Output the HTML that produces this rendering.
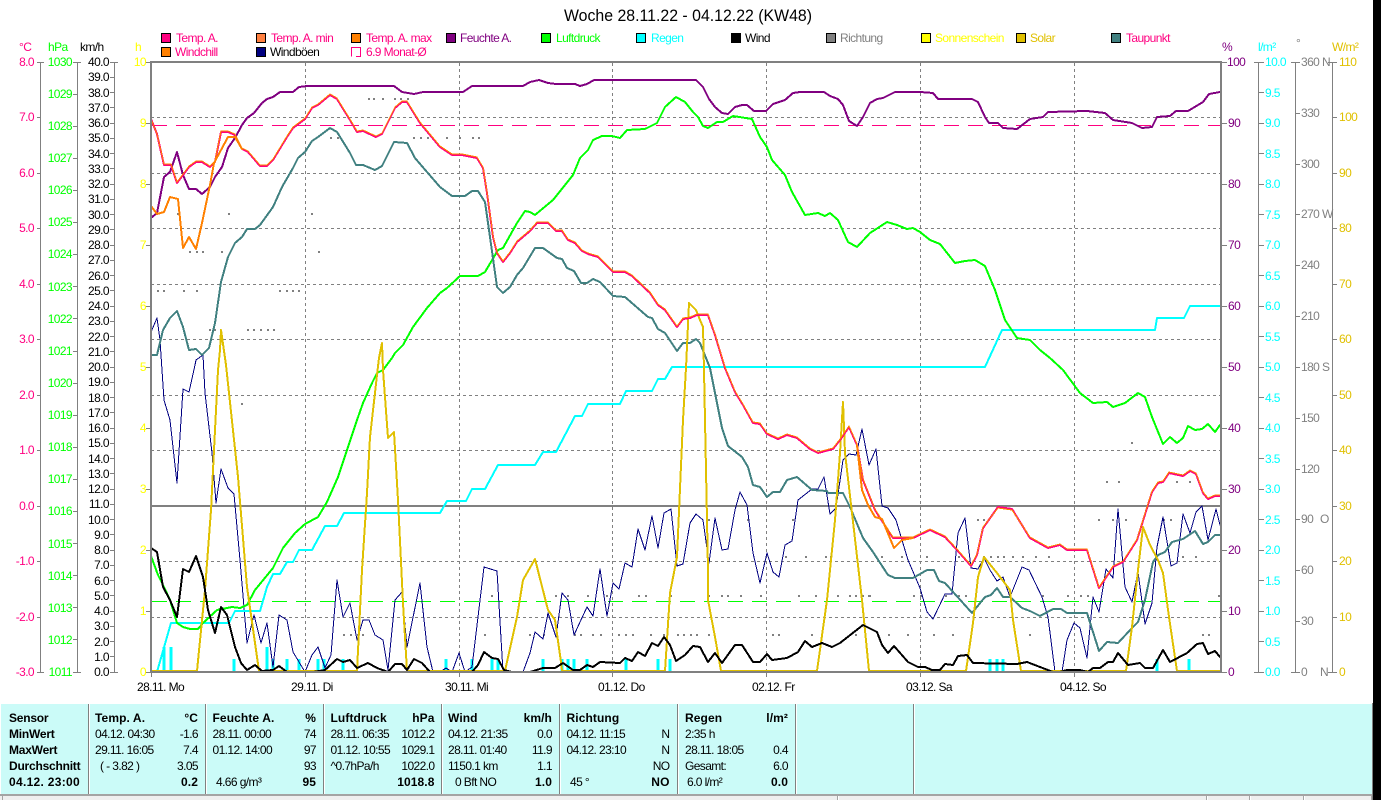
<!DOCTYPE html>
<html lang="de"><head><meta charset="utf-8"><title>Woche 28.11.22 - 04.12.22 (KW48)</title>
<style>
html,body{margin:0;padding:0;background:#fff;width:1381px;height:800px;overflow:hidden}
svg{display:block;position:absolute;left:0;top:0;white-space:pre}
text{font-family:"Liberation Sans",sans-serif;font-size:12px;letter-spacing:-.6px}
.l{fill:none;stroke-linejoin:round;stroke-linecap:round;shape-rendering:crispEdges}
.c{shape-rendering:crispEdges}
.b{font-weight:bold;letter-spacing:.1px}
.n{font-weight:bold;letter-spacing:-.22px}
.t{font-weight:bold;letter-spacing:.3px}
.e{text-anchor:end}
</style></head><body>
<svg width="1381" height="800" viewBox="0 0 1381 800" xmlns="http://www.w3.org/2000/svg">
<rect width="1381" height="800" fill="#fff"/>
<text x="564" y="21" font-size="17" textLength="248" lengthAdjust="spacingAndGlyphs" style="font-size:17px;letter-spacing:0" fill="#000">Woche 28.11.22 - 04.12.22 (KW48)</text>

<!-- legend -->
<g class="c" stroke="#000" stroke-width="1">
<rect x="161.5" y="33.5" width="9" height="9" fill="#FF0080"/>
<rect x="256.5" y="33.5" width="9" height="9" fill="#FF8040"/>
<rect x="351.5" y="33.5" width="9" height="9" fill="#FF8000"/>
<rect x="446.5" y="33.5" width="9" height="9" fill="#800080"/>
<rect x="541.5" y="33.5" width="9" height="9" fill="#00FF00"/>
<rect x="636.5" y="33.5" width="9" height="9" fill="#00FFFF"/>
<rect x="731.5" y="33.5" width="9" height="9" fill="#000"/>
<rect x="826.5" y="33.5" width="9" height="9" fill="#808080"/>
<rect x="921.5" y="33.5" width="9" height="9" fill="#FFFF00"/>
<rect x="1016.5" y="33.5" width="9" height="9" fill="#E0C000"/>
<rect x="1111.5" y="33.5" width="9" height="9" fill="#408080"/>
<rect x="161.5" y="47.5" width="9" height="9" fill="#FF8000"/>
<rect x="256.5" y="47.5" width="9" height="9" fill="#000080"/>
</g>
<path class="c" d="M351.5 51V47.5H360.5V56.5H356" fill="none" stroke="#FF0080"/>
<path class="c" d="M351.5 51V56.5" fill="none" stroke="#FF0080"/>
<text x="176" y="42" fill="#FF0080">Temp. A.</text>
<text x="271" y="42" fill="#FF0080">Temp. A. min</text>
<text x="366" y="42" fill="#FF0080">Temp. A. max</text>
<text x="460" y="42" fill="#800080">Feuchte A.</text>
<text x="556" y="42" fill="#00FF00">Luftdruck</text>
<text x="651" y="42" fill="#00FFFF">Regen</text>
<text x="745" y="42" fill="#000">Wind</text>
<text x="840" y="42" fill="#808080">Richtung</text>
<text x="935" y="42" fill="#FFFF00">Sonnenschein</text>
<text x="1030" y="42" fill="#E0C000">Solar</text>
<text x="1126" y="42" fill="#FF0080">Taupunkt</text>
<text x="175" y="56" fill="#FF0080">Windchill</text>
<text x="270" y="56" fill="#000">Windböen</text>
<text x="366" y="56" fill="#FF0080">6.9 Monat-Ø</text>

<!-- unit heads -->
<text x="19" y="51" fill="#FF0080">°C</text>
<text x="48" y="51" fill="#00FF00">hPa</text>
<text x="80" y="51" fill="#000">km/h</text>
<text x="135" y="51" fill="#FFFF00">h</text>
<text x="1222" y="51" fill="#800080">%</text>
<text x="1258" y="51" fill="#00FFFF">l/m²</text>
<text x="1296" y="47" fill="#808080">°</text>
<text x="1332" y="51" fill="#E0C000">W/m²</text>

<!-- axes -->
<path class="c" fill="none" stroke="#808080" stroke-width="1" d="M40.5 62V672M77.5 62V672M114.5 62V672M1258.5 62V672M1295.5 62V672M1332.5 62V672
M37 62.5H44M37 117.5H41M37 173.5H41M37 228.5H41M37 284.5H41M37 339.5H41M37 395.5H41M37 450.5H41M37 506.5H41M37 561.5H41M37 617.5H41M37 672.5H44
M73 62.5H81M73 94.5H78M73 126.5H78M73 158.5H78M73 190.5H78M73 222.5H78M73 254.5H78M73 286.5H78M73 318.5H78M73 351.5H78M73 383.5H78M73 415.5H78M73 447.5H78M73 479.5H78M73 511.5H78M73 543.5H78M73 575.5H78M73 607.5H78M73 639.5H78M73 672.5H81
M110 62.5H118M110 77.5H115M110 92.5H115M110 107.5H115M110 123.5H115M110 138.5H115M110 153.5H115M110 168.5H115M110 184.5H115M110 199.5H115M110 214.5H115M110 229.5H115M110 245.5H115M110 260.5H115M110 275.5H115M110 290.5H115M110 306.5H115M110 321.5H115M110 336.5H115M110 351.5H115M110 367.5H115M110 382.5H115M110 397.5H115M110 412.5H115M110 428.5H115M110 443.5H115M110 458.5H115M110 473.5H115M110 489.5H115M110 504.5H115M110 519.5H115M110 534.5H115M110 550.5H115M110 565.5H115M110 580.5H115M110 595.5H115M110 611.5H115M110 626.5H115M110 641.5H115M110 656.5H115M110 672.5H118
M146 62.5H150M146 123.5H150M146 184.5H150M146 245.5H150M146 306.5H150M146 367.5H150M146 428.5H150M146 489.5H150M146 550.5H150M146 611.5H150M146 672.5H150
M1222 62.5H1227M1222 123.5H1227M1222 184.5H1227M1222 245.5H1227M1222 306.5H1227M1222 367.5H1227M1222 428.5H1227M1222 489.5H1227M1222 550.5H1227M1222 611.5H1227M1222 672.5H1227
M1254 62.5H1264M1259 92.5H1264M1259 123.5H1264M1259 153.5H1264M1259 184.5H1264M1259 214.5H1264M1259 245.5H1264M1259 275.5H1264M1259 306.5H1264M1259 336.5H1264M1259 367.5H1264M1259 397.5H1264M1259 428.5H1264M1259 458.5H1264M1259 489.5H1264M1259 519.5H1264M1259 550.5H1264M1259 580.5H1264M1259 611.5H1264M1259 641.5H1264M1254 672.5H1264
M1291 62.5H1300M1296 113.5H1300M1296 164.5H1300M1296 214.5H1300M1296 265.5H1300M1296 316.5H1300M1296 367.5H1300M1296 418.5H1300M1296 469.5H1300M1296 519.5H1300M1296 570.5H1300M1296 621.5H1300M1291 672.5H1300
M1328 62.5H1337M1333 117.5H1337M1333 173.5H1337M1333 228.5H1337M1333 284.5H1337M1333 339.5H1337M1333 395.5H1337M1333 450.5H1337M1333 506.5H1337M1333 561.5H1337M1333 617.5H1337M1328 672.5H1337
M151.5 672V677M305.5 672V677M459.5 672V677M612.5 672V677M766.5 672V677M920.5 672V677M1074.5 672V677"/>

<g class="e" fill="#FF0080">
<text x="34" y="66">8.0</text><text x="34" y="121">7.0</text><text x="34" y="177">6.0</text><text x="34" y="232">5.0</text><text x="34" y="288">4.0</text><text x="34" y="343">3.0</text><text x="34" y="399">2.0</text><text x="34" y="454">1.0</text><text x="34" y="510">0.0</text><text x="34" y="565">-1.0</text><text x="34" y="621">-2.0</text><text x="34" y="676">-3.0</text>
</g>
<g class="e" fill="#00FF00">
<text x="72" y="66">1030</text><text x="72" y="98">1029</text><text x="72" y="130">1028</text><text x="72" y="162">1027</text><text x="72" y="194">1026</text><text x="72" y="226">1025</text><text x="72" y="258">1024</text><text x="72" y="291">1023</text><text x="72" y="323">1022</text><text x="72" y="355">1021</text><text x="72" y="387">1020</text><text x="72" y="419">1019</text><text x="72" y="451">1018</text><text x="72" y="483">1017</text><text x="72" y="515">1016</text><text x="72" y="548">1015</text><text x="72" y="580">1014</text><text x="72" y="612">1013</text><text x="72" y="644">1012</text><text x="72" y="676">1011</text>
</g>
<g class="e" fill="#000">
<text x="109" y="66">40.0</text><text x="109" y="81">39.0</text><text x="109" y="97">38.0</text><text x="109" y="112">37.0</text><text x="109" y="127">36.0</text><text x="109" y="142">35.0</text><text x="109" y="158">34.0</text><text x="109" y="173">33.0</text><text x="109" y="188">32.0</text><text x="109" y="203">31.0</text><text x="109" y="219">30.0</text><text x="109" y="234">29.0</text><text x="109" y="249">28.0</text><text x="109" y="264">27.0</text><text x="109" y="280">26.0</text><text x="109" y="295">25.0</text><text x="109" y="310">24.0</text><text x="109" y="325">23.0</text><text x="109" y="341">22.0</text><text x="109" y="356">21.0</text><text x="109" y="371">20.0</text><text x="109" y="386">19.0</text><text x="109" y="402">18.0</text><text x="109" y="417">17.0</text><text x="109" y="432">16.0</text><text x="109" y="447">15.0</text><text x="109" y="463">14.0</text><text x="109" y="478">13.0</text><text x="109" y="493">12.0</text><text x="109" y="508">11.0</text><text x="109" y="524">10.0</text><text x="109" y="539">9.0</text><text x="109" y="554">8.0</text><text x="109" y="569">7.0</text><text x="109" y="585">6.0</text><text x="109" y="600">5.0</text><text x="109" y="615">4.0</text><text x="109" y="630">3.0</text><text x="109" y="646">2.0</text><text x="109" y="661">1.0</text><text x="109" y="676">0.0</text>
</g>
<g class="e" fill="#FFFF00">
<text x="146" y="66">10</text><text x="146" y="127">9</text><text x="146" y="188">8</text><text x="146" y="249">7</text><text x="146" y="310">6</text><text x="146" y="371">5</text><text x="146" y="432">4</text><text x="146" y="493">3</text><text x="146" y="554">2</text><text x="146" y="615">1</text><text x="146" y="676">0</text>
</g>
<g fill="#800080">
<text x="1227" y="66">100</text><text x="1228" y="127">90</text><text x="1228" y="188">80</text><text x="1228" y="249">70</text><text x="1228" y="310">60</text><text x="1228" y="371">50</text><text x="1228" y="432">40</text><text x="1228" y="493">30</text><text x="1228" y="554">20</text><text x="1228" y="615">10</text><text x="1228" y="676">0</text>
</g>
<g fill="#00FFFF">
<text x="1265" y="66">10.0</text><text x="1265" y="97">9.5</text><text x="1265" y="127">9.0</text><text x="1265" y="158">8.5</text><text x="1265" y="188">8.0</text><text x="1265" y="219">7.5</text><text x="1265" y="249">7.0</text><text x="1265" y="280">6.5</text><text x="1265" y="310">6.0</text><text x="1265" y="341">5.5</text><text x="1265" y="371">5.0</text><text x="1265" y="402">4.5</text><text x="1265" y="432">4.0</text><text x="1265" y="463">3.5</text><text x="1265" y="493">3.0</text><text x="1265" y="524">2.5</text><text x="1265" y="554">2.0</text><text x="1265" y="585">1.5</text><text x="1265" y="615">1.0</text><text x="1265" y="646">0.5</text><text x="1265" y="676">0.0</text>
</g>
<g fill="#808080">
<text x="1301" y="66">360 N</text><text x="1301" y="117">330</text><text x="1301" y="168">300</text><text x="1301" y="218">270 W</text><text x="1301" y="269">240</text><text x="1301" y="320">210</text><text x="1301" y="371">180 S</text><text x="1301" y="422">150</text><text x="1301" y="473">120</text><text x="1301" y="523">90</text><text x="1320" y="523">O</text><text x="1301" y="574">60</text><text x="1301" y="625">30</text><text x="1301" y="676">0</text><text x="1320" y="676">N</text>
</g>
<g fill="#E0C000">
<text x="1339" y="66">110</text><text x="1339" y="121">100</text><text x="1339" y="177">90</text><text x="1339" y="232">80</text><text x="1339" y="288">70</text><text x="1339" y="343">60</text><text x="1339" y="399">50</text><text x="1339" y="454">40</text><text x="1339" y="510">30</text><text x="1339" y="565">20</text><text x="1339" y="621">10</text><text x="1339" y="676">0</text>
</g>
<g fill="#000">
<text x="137" y="691">28.11.  Mo</text><text x="291" y="691">29.11.  Di</text><text x="445" y="691">30.11.  Mi</text><text x="598" y="691">01.12.  Do</text><text x="752" y="691">02.12.  Fr</text><text x="906" y="691">03.12.  Sa</text><text x="1060" y="691">04.12.  So</text>
</g>

<!-- grid -->
<path class="c" fill="none" stroke="#808080" stroke-dasharray="3 3" d="M151 117.5H1220M151 173.5H1220M151 228.5H1220M151 284.5H1220M151 339.5H1220M151 395.5H1220M151 450.5H1220M151 561.5H1220M151 617.5H1220M305.5 63V672M459.5 63V672M612.5 63V672M766.5 63V672M920.5 63V672M1074.5 63V672"/>
<path class="c" fill="none" stroke="#FF0080" stroke-dasharray="15 9" d="M152 125.5H1220"/>
<path class="c" fill="none" stroke="#00FF00" stroke-dasharray="15 9" d="M152 601.5H1220"/>
<rect class="c" x="152" y="505" width="1068" height="2" fill="#808080"/>

<!-- direction dots -->
<path class="c" fill="none" stroke="#808080" stroke-width="2" d="M368 99h2M373 99h2M382 99h2M394 99h2M400 99h2M407 99h2
M330 138h2M337 138h2M413 138h2M420 138h2M427 138h2M446 138h2M459 138h2M472 138h2M478 138h2
M177 214h2M228 214h2M311 214h2
M189 252h2M196 252h2M202 252h2M221 252h2M318 252h2
M157 291h2M163 291h2M183 291h2M196 291h2M279 291h2M286 291h2M292 291h2M298 291h2
M209 330h2M214 330h2M247 330h2M253 330h2M260 330h2M267 330h2M273 330h2
M241 404h2M491 596h2
M343 635h2M350 635h2M357 635h2M362 635h2M484 635h2M529 635h2
M708 520h2M747 520h2M792 520h2M785 557h2M805 557h2M825 557h2M830 557h2
M555 596h2M567 596h2M587 596h2M606 596h2M638 596h2M645 596h2M670 596h2M708 596h2M721 596h2M727 596h2M740 596h2M760 596h2M798 596h2M815 596h2M837 596h2M849 596h2M855 596h2M862 596h2M869 596h2M920 596h2
M543 635h2M574 635h2M580 635h2M592 635h2M600 635h2M618 635h2M625 635h2M632 635h2M650 635h2M663 635h2M677 635h2M683 635h2M690 635h2M696 635h2M708 635h2M772 635h2M778 635h2M811 635h2M888 635h2M907 635h2
M977 520h2M983 520h2M1098 520h2M1112 520h2M1125 520h2M1163 520h2M1170 520h2M1106 482h2M1118 482h2M1176 482h2M1189 482h2M1131 443h2
M881 557h2M901 557h2M926 557h2M958 557h2M983 557h2M990 557h2M997 557h2M1003 557h2M1012 557h2M1022 557h2M1035 557h2M1048 557h2M1155 557h2M1182 557h2M1195 557h2
M868 596h2M913 596h2M945 596h2M958 596h2M965 596h2M1042 596h2M1067 596h2M1080 596h2M1087 596h2M1218 596h2
M855 635h2M933 635h2M952 635h2M1029 635h2M1202 635h2M1208 635h2"/>

<!-- rain bars -->
<path class="c" fill="none" stroke="#00FFFF" stroke-width="3" d="M164 647V672M171 647V672M234 659V672M267 647V672M273 659V672M287 659V672M299 659V672M318 659V672M324 659V672M343 659V672M446 659V672M472 659V672M492 659V672M498 659V672M543 659V672M562 659V672M568 659V672M574 659V672M587 659V672M626 659V672M658 659V672M670 659V672M990 659V672M997 659V672M1003 659V672M1157 659V672M1189 659V672"/>

<!-- Feuchte -->
<polyline class="l" stroke="#800080" stroke-width="2" points="151,218 157,213 164,177 170,172 177,152 183,175 189,189 196,189 202,194 210,187 215,177 222,167 228,148 235,138 242,125 247,118 254,113 262,103 267,99 273,97 280,92 293,92 299,87 307,86 394,86 402,92 414,94 423,92 463,92 472,86 523,86 530,82 539,80 548,83 556,84 575,84 580,86 587,84 594,80 696,80 703,87 709,99 715,107 722,113 728,114 735,107 742,105 747,105 754,111 766,111 773,104 785,100 793,93 800,92 824,92 830,96 838,99 843,105 849,121 857,126 863,117 870,103 877,99 883,98 895,92 920,92 933,93 938,99 972,99 978,102 985,117 989,123 998,123 1003,128 1017,129 1030,119 1043,117 1048,112 1087,111 1105,113 1113,120 1132,123 1142,128 1152,127 1157,117 1170,116 1176,111 1188,111 1203,102 1209,94 1220,92"/>

<!-- Windboeen -->
<polyline class="l" stroke="#000080" stroke-width="1" points="151,332 157,318 160,340 162,370 164,400 170,420 177,483 183,389 189,392 195,365 196,360 203,355 205,393 212,453 216,503 221,469 228,488 234,494 240,560 247,643 254,615 261,643 267,623 273,667 279,615 287,620 293,652 305,672 312,655 318,647 325,668 331,655 337,580 343,617 350,603 357,640 363,620 369,620 375,635 383,640 388,670 395,600 402,592 407,647 420,583 427,647 433,672 440,672 446,668 452,672 459,653 465,672 472,667 484,567 497,571 503,672 523,672 530,653 535,632 543,639 548,613 556,637 562,593 568,600 574,635 587,607 593,616 600,569 607,616 613,583 619,589 625,563 632,567 638,529 645,550 652,516 658,548 664,513 671,509 677,566 683,564 690,523 696,514 703,520 709,563 715,518 722,550 728,549 735,510 740,492 747,505 753,553 760,583 767,553 773,572 779,577 785,545 792,541 798,500 812,489 818,489 824,477 830,514 836,508 843,460 849,454 856,455 862,429 869,465 876,449 882,506 888,508 896,520 908,560 920,588 927,612 933,619 945,594 952,594 958,533 965,518 971,568 978,569 984,558 990,570 997,581 1003,577 1010,597 1022,567 1029,570 1042,597 1048,617 1055,672 1062,672 1067,640 1074,623 1080,628 1087,658 1093,597 1099,612 1106,569 1113,578 1118,509 1125,587 1132,602 1138,572 1145,624 1152,603 1157,547 1163,517 1171,566 1177,563 1183,514 1190,533 1196,512 1202,506 1208,540 1216,509 1220,525"/>

<!-- Regen cumul -->
<polyline class="l" stroke="#00FFFF" stroke-width="2" points="151,672 157,672 171,623 229,623 235,611 260,611 267,587 273,574 280,574 287,562 293,562 299,550 312,550 325,526 337,526 344,513 440,513 447,501 466,501 472,489 485,489 498,465 535,465 543,452 556,452 575,416 582,416 588,404 620,404 626,391 652,391 658,379 665,379 672,367 985,367 1002,330 1155,330 1157,318 1184,318 1190,306 1220,306"/>

<!-- Luftdruck -->
<polyline class="l" stroke="#00FF00" stroke-width="2" points="151,556 158,575 164,587 170,600 177,623 183,627 190,629 198,629 203,623 217,610 232,607 240,608 247,605 255,590 273,568 283,548 295,533 305,524 318,517 327,502 338,477 357,420 363,403 372,383 377,373 383,370 392,358 395,353 403,345 413,327 427,308 440,293 447,288 460,276 478,276 485,272 498,250 503,248 517,223 525,211 530,212 535,215 553,200 573,175 580,158 588,150 593,140 602,136 612,136 620,138 627,130 645,129 657,123 665,107 676,97 685,102 693,112 698,117 703,126 708,128 717,122 723,122 733,116 752,119 760,137 767,147 772,160 785,175 792,192 805,215 818,213 825,216 830,213 838,220 848,242 857,247 870,233 887,222 897,225 907,229 913,228 920,232 930,240 940,244 955,263 965,261 975,260 985,266 995,290 1005,320 1017,338 1030,340 1040,350 1050,358 1063,370 1080,393 1093,403 1107,402 1113,407 1125,403 1138,393 1145,397 1152,417 1163,444 1170,437 1177,443 1183,438 1188,426 1195,430 1202,429 1208,424 1215,432 1220,425"/>

<!-- Taupunkt -->
<polyline class="l" stroke="#408080" stroke-width="2" points="151,355 157,355 163,330 170,318 177,311 183,327 189,350 196,349 202,355 209,348 215,323 221,282 228,257 235,243 242,237 247,229 255,229 260,225 273,207 282,187 293,168 298,158 305,152 312,141 318,137 330,128 337,132 350,153 356,165 363,165 375,170 382,166 394,142 407,143 415,158 427,172 440,187 452,196 465,196 472,191 478,191 485,202 490,237 497,287 503,293 510,287 517,275 523,268 535,248 543,248 557,258 562,259 567,268 574,271 581,283 587,283 593,279 600,282 613,296 625,297 648,317 652,318 658,329 665,333 677,351 683,343 690,343 696,339 700,343 710,368 722,428 728,446 742,457 748,467 753,485 760,487 767,497 773,492 780,492 787,480 797,477 812,490 827,491 828,493 843,493 850,507 863,538 873,552 888,575 895,578 913,578 927,570 934,570 939,581 945,583 972,613 985,597 991,595 997,588 1003,597 1010,597 1022,608 1030,611 1040,616 1053,609 1061,609 1067,613 1087,613 1099,651 1107,642 1118,643 1132,628 1138,622 1145,600 1153,562 1158,555 1165,552 1172,542 1183,539 1195,531 1203,544 1208,542 1215,535 1220,535"/>

<!-- Solar -->
<polyline class="l" stroke="#E0C000" stroke-width="2" points="151,671 197,671 205,590 211,510 218,370 220,350 221,330 226,365 238,477 247,587 259,671 357,671 362,570 367,493 370,437 377,375 379,358 382,343 383,370 388,438 394,432 398,500 403,603 407,671 505,671 517,617 523,580 535,559 548,610 555,620 561,662 562,671 665,671 670,593 677,557 683,420 686,368 689,303 696,310 700,320 703,327 704,370 708,570 708,600 715,637 721,671 817,671 827,600 835,520 840,453 843,402 845,453 852,513 862,600 869,671 966,671 973,623 978,577 984,557 997,573 1010,590 1013,620 1021,671 1126,671 1132,627 1138,570 1143,527 1150,545 1158,560 1163,573 1169,617 1177,671 1220,671"/>

<!-- Temperature (pink underlay) -->
<polyline class="l" stroke="#FF0080" stroke-width="2" points="151,119 157,134 164,165 171,165 177,183 183,175 189,167 196,162 202,162 210,167 215,162 221,132 228,132 235,135 242,149 248,152 260,166 267,166 273,160 287,137 293,128 305,119 312,108 318,105 330,95 337,99 350,120 357,132 363,131 376,137 382,134 395,108 402,102 407,102 420,123 440,147 452,155 462,155 477,158 483,168 487,193 493,237 497,253 503,262 510,253 517,242 530,231 537,223 548,223 556,231 562,231 568,240 575,243 582,251 588,254 598,257 613,272 625,272 632,276 650,293 658,305 665,310 677,327 683,319 690,318 697,315 708,315 715,335 725,368 735,392 743,405 753,423 760,424 767,434 778,439 787,435 797,438 810,449 818,453 833,449 840,440 849,427 857,445 863,480 875,510 893,538 913,538 930,530 945,537 957,550 971,566 977,555 983,528 998,507 1012,509 1030,538 1048,548 1060,545 1067,550 1087,550 1099,588 1113,567 1123,562 1137,540 1152,492 1158,483 1163,482 1169,473 1183,476 1190,471 1196,474 1203,493 1208,499 1215,496 1220,496"/>
<!-- Orange overlay -->
<polyline class="l" stroke="#FF8000" stroke-width="1" points="151,119 157,134 164,164 171,164 177,182 183,174 189,166 196,161 202,161 210,166 215,161 221,131 228,131 235,134 242,148 248,151 260,165 267,165 273,159 287,136 293,127 305,118 312,107 318,104 330,94 337,98 350,119 357,131 363,130 376,136 382,133 395,107 402,101 407,101 420,122 440,146 452,154 462,154 477,157 483,167 487,192 493,236 497,252 503,261 510,252 517,241 530,230 537,222 548,222 556,230 562,230 568,239 575,242 582,250 588,253 598,256 613,271 625,271 632,275 650,292 658,304 665,309 677,326 683,318 690,317 697,314 708,314 715,334 725,367 735,391 743,404 753,422 760,423 767,433 778,438 787,434 797,437 810,448 818,452 833,448 840,439 849,426 857,444 863,479 875,509 893,537 913,537 930,529 945,536 957,549 971,565 977,554 983,527 998,508 1012,510 1030,537 1048,547 1060,544 1067,549 1087,549 1099,587 1113,566 1123,561 1137,539 1152,491 1158,482 1163,481 1169,472 1183,475 1190,470 1196,473 1203,492 1208,498 1215,495 1220,495"/>
<polyline class="l" stroke="#FF8000" stroke-width="2" points="151,206 157,214 164,212 170,197 178,199 183,248 189,237 196,249 202,223 210,185 214,163 228,137 235,137 242,149"/>
<polyline class="l" stroke="#FF8000" stroke-width="2" points="857,445 862,490 868,505 875,517 882,519 894,548 902,540 913,538"/>

<!-- Wind -->
<polyline class="l" stroke="#000" stroke-width="2" points="151,548 157,552 163,587 170,600 177,617 183,569 189,572 196,556 203,577 208,610 215,633 221,607 227,615 235,647 241,663 247,670 255,665 262,671 273,670 279,666 287,672 313,672 325,670 337,659 343,662 350,660 357,668 368,663 377,668 388,672 395,664 402,664 407,670 414,659 422,663 430,672 472,672 478,665 484,652 492,658 498,659 504,670 512,672 530,672 543,668 555,668 563,663 573,670 580,670 587,665 593,667 600,662 620,663 625,658 632,661 638,652 645,656 652,643 658,646 664,637 670,645 676,661 685,655 693,646 700,647 708,662 715,653 722,663 735,645 742,645 753,662 760,662 767,654 772,660 787,658 798,652 805,641 812,647 822,643 832,647 840,643 863,625 877,632 882,645 888,653 894,646 908,662 918,667 925,667 932,670 940,670 945,664 953,665 958,656 967,655 973,663 1017,664 1027,662 1053,672 1060,672 1067,670 1080,670 1088,672 1093,668 1100,668 1108,662 1113,662 1118,653 1128,665 1140,663 1145,668 1153,668 1163,650 1170,662 1187,653 1197,644 1203,643 1208,654 1215,651 1220,657"/>

<!-- frame -->
<rect class="c" x="150" y="61" width="1072" height="2" fill="#808080"/>
<rect class="c" x="150" y="61" width="2" height="612" fill="#808080"/>
<rect class="c" x="1220" y="61" width="2" height="612" fill="#808080"/>
<rect class="c" x="150" y="671" width="1072" height="2" fill="#808080"/>

<!-- bottom panel -->
<rect class="c" x="1" y="704" width="1371" height="90" fill="#CBFBF8"/>
<g class="c">
<path fill="none" stroke="#808080" d="M88.5 704V794M205.5 704V794M323.5 704V794M441.5 704V794M559.5 704V794M677.5 704V794M795.5 704V794M913.5 704V794M1372.5 703V800"/>
<path fill="none" stroke="#fff" d="M89.5 704V794M206.5 704V794M324.5 704V794M442.5 704V794M560.5 704V794M678.5 704V794M796.5 704V794M914.5 704V794"/>
<rect x="0" y="794" width="1372" height="2" fill="#A4A4A4"/>
<rect x="0" y="796" width="1372" height="4" fill="#EFEFEF"/>
<path fill="none" stroke="#A4A4A4" d="M2.5 796V800M837.5 796V800M1206.5 796V800M1249.5 796V800M1303.5 796V800M1371.5 796V800"/>
<path fill="none" stroke="#fff" d="M838.5 796V800M1207.5 796V800M1250.5 796V800M1304.5 796V800"/>
</g>
<rect class="c" x="1373" y="0" width="8" height="800" fill="#000"/>

<g fill="#000">
<text class="n" x="9" y="722">Sensor</text>
<text class="n" x="9" y="738">MinWert</text>
<text class="n" x="9" y="754">MaxWert</text>
<text class="n" x="9" y="770">Durchschnitt</text>
<text class="t" x="9" y="786">04.12.  23:00</text>

<text class="b" x="95" y="722">Temp. A.</text><text class="b e" x="198" y="722">°C</text>
<text x="95" y="738">04.12.  04:30</text><text class="e" x="198" y="738">-1.6</text>
<text x="95" y="754">29.11.  16:05</text><text class="e" x="198" y="754">7.4</text>
<text x="100" y="770">( - 3.82 )</text><text class="e" x="198" y="770">3.05</text>
<text class="b e" x="198" y="786">0.2</text>

<text class="b" x="212.500" y="722">Feuchte A.</text><text class="b e" x="316" y="722">%</text>
<text x="212.500" y="738">28.11.  00:00</text><text class="e" x="316" y="738">74</text>
<text x="212.500" y="754">01.12.  14:00</text><text class="e" x="316" y="754">97</text>
<text class="e" x="316" y="770">93</text>
<text x="216" y="786">4.66 g/m³</text><text class="b e" x="316" y="786">95</text>

<text class="b" x="330.500" y="722">Luftdruck</text><text class="b e" x="434.500" y="722">hPa</text>
<text x="330.500" y="738">28.11.  06:35</text><text class="e" x="434.500" y="738">1012.2</text>
<text x="330.500" y="754">01.12.  10:55</text><text class="e" x="434.500" y="754">1029.1</text>
<text x="330.500" y="770">^0.7hPa/h</text><text class="e" x="434.500" y="770">1022.0</text>
<text class="b e" x="434.500" y="786">1018.8</text>

<text class="b" x="448" y="722">Wind</text><text class="b e" x="552" y="722">km/h</text>
<text x="448" y="738">04.12.  21:35</text><text class="e" x="552" y="738">0.0</text>
<text x="448" y="754">28.11.  01:40</text><text class="e" x="552" y="754">11.9</text>
<text x="448" y="770">1150.1 km</text><text class="e" x="552" y="770">1.1</text>
<text x="455" y="786">0 Bft NO</text><text class="b e" x="552" y="786">1.0</text>

<text class="b" x="566.500" y="722">Richtung</text>
<text x="566.500" y="738">04.12.  11:15</text><text class="e" x="669.500" y="738">N</text>
<text x="566.500" y="754">04.12.  23:10</text><text class="e" x="669.500" y="754">N</text>
<text class="e" x="669.500" y="770">NO</text>
<text x="570" y="786">45 °</text><text class="b e" x="669.500" y="786">NO</text>

<text class="b" x="685" y="722">Regen</text><text class="b e" x="788" y="722">l/m²</text>
<text x="685" y="738">2:35 h</text>
<text x="685" y="754">28.11.  18:05</text><text class="e" x="788" y="754">0.4</text>
<text x="685" y="770">Gesamt:</text><text class="e" x="788" y="770">6.0</text>
<text x="687" y="786">6.0 l/m²</text><text class="b e" x="788" y="786">0.0</text>
</g>
</svg>
</body></html>
